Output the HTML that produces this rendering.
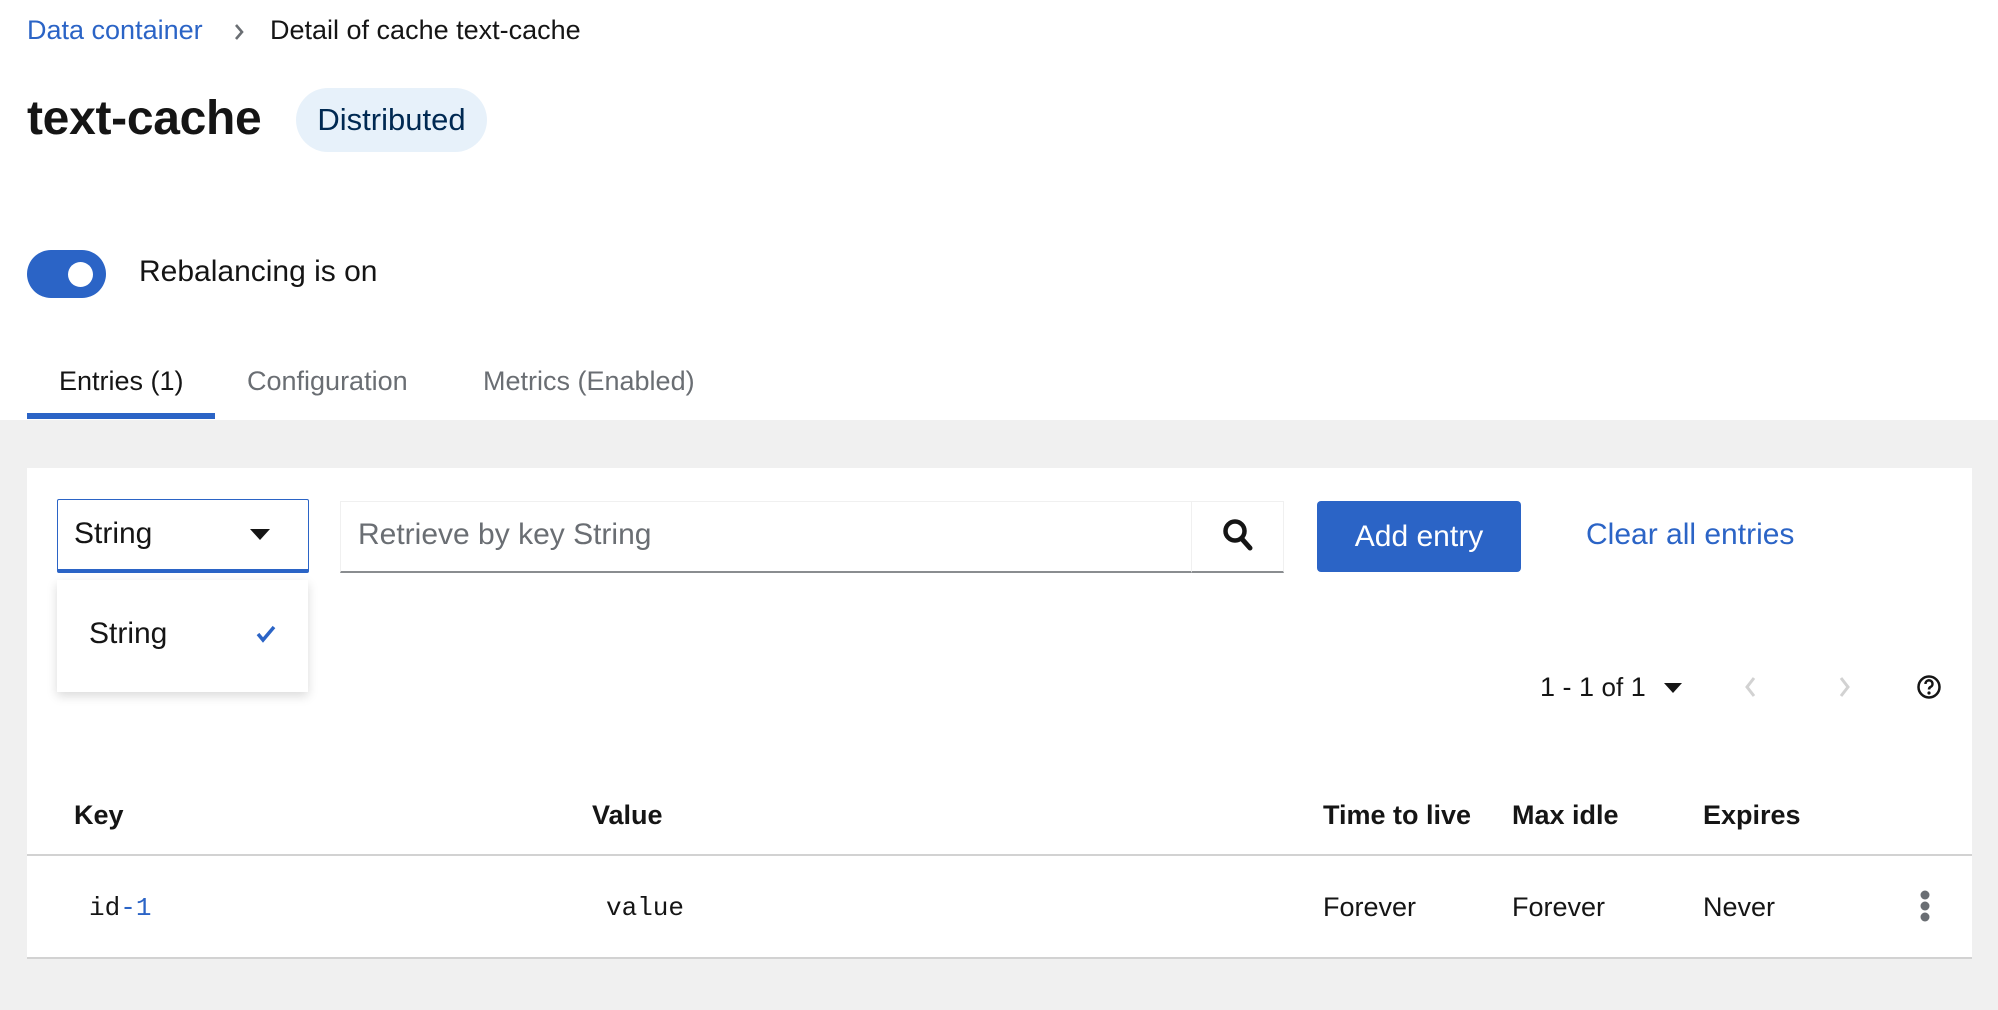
<!DOCTYPE html>
<html><head><meta charset="utf-8"><style>
*{box-sizing:border-box;margin:0;padding:0}
body{width:1998px;height:1010px;background:#fff;font-family:"Liberation Sans",sans-serif;color:#151515;position:relative;overflow:hidden}
.a{position:absolute;white-space:nowrap}
.gray{position:absolute;left:0;top:420px;width:1998px;height:590px;background:#f0f0f0}
.card{position:absolute;left:27px;top:468px;width:1945px;height:491px;background:#fff}
.th{font-weight:bold;font-size:27px;top:800px}
.td{font-size:27px;top:892px}
.mono{font-family:"Liberation Mono",monospace;font-size:26px}
</style></head><body>
<div class="a" style="left:27px;top:15px;font-size:27px;color:#2b64c6">Data container</div>
<svg class="a" style="left:233px;top:23px" width="12" height="18" viewBox="0 0 12 18"><path d="M3 2l6 7-6 7" stroke="#6a6e73" stroke-width="2.6" fill="none"/></svg>
<div class="a" style="left:270px;top:15px;font-size:27px">Detail of cache text-cache</div>
<div class="a" style="left:27px;top:91px;font-size:48px;font-weight:bold;letter-spacing:-0.3px">text-cache</div>
<div class="a" style="left:296px;top:88px;width:191px;height:64px;border-radius:32px;background:#e7f1fa;color:#002952;font-size:31px;line-height:64px;text-align:center">Distributed</div>
<div class="a" style="left:27px;top:250px;width:79px;height:48px;border-radius:24px;background:#2b64c6"></div>
<div class="a" style="left:68px;top:262px;width:25px;height:25px;border-radius:50%;background:#fff"></div>
<div class="a" style="left:139px;top:255px;font-size:30px">Rebalancing is on</div>
<div class="a" style="left:59px;top:366px;font-size:27px">Entries (1)</div>
<div class="a" style="left:247px;top:366px;font-size:27px;color:#6a6e73">Configuration</div>
<div class="a" style="left:483px;top:366px;font-size:27px;color:#6a6e73">Metrics (Enabled)</div>
<div class="a" style="left:27px;top:413px;width:188px;height:6px;background:#2b64c6"></div>
<div class="gray"></div>
<div class="card"></div>
<div class="a" style="left:57px;top:499px;width:252px;height:74px;border:1.5px solid #2b64c6;border-bottom:4px solid #2b64c6;border-radius:2px"></div>
<div class="a" style="left:74px;top:517px;font-size:30px">String</div>
<svg class="a" style="left:250px;top:529px" width="20" height="12"><path d="M0 0h20L10 11z" fill="#151515"/></svg>
<div class="a" style="left:57px;top:580px;width:251px;height:112px;background:#fff;box-shadow:0 4px 10px rgba(0,0,0,.15)"></div>
<div class="a" style="left:89px;top:617px;font-size:30px">String</div>
<svg class="a" style="left:256px;top:625px" width="20" height="18"><path d="M2 9l5 6L18 2" stroke="#2b64c6" stroke-width="3.5" fill="none"/></svg>
<div class="a" style="left:340px;top:501px;width:852px;height:72px;border:1.5px solid #f0f0f0;border-bottom:2.5px solid #8a8d90"></div>
<div class="a" style="left:358px;top:518px;font-size:30px;color:#6a6e73">Retrieve by key String</div>
<div class="a" style="left:1191px;top:501px;width:93px;height:72px;border:1.5px solid #f0f0f0;border-bottom:2.5px solid #8a8d90"></div>
<svg class="a" style="left:1222px;top:518px" width="32" height="34" viewBox="0 0 32 34"><circle cx="13" cy="13" r="9.5" stroke="#151515" stroke-width="4.5" fill="none"/><path d="M20 21l8 9" stroke="#151515" stroke-width="5" stroke-linecap="round"/></svg>
<div class="a" style="left:1317px;top:501px;width:204px;height:71px;background:#2b64c6;border-radius:4px;color:#fff;font-size:30px;line-height:71px;text-align:center">Add entry</div>
<div class="a" style="left:1586px;top:518px;font-size:30px;color:#2b64c6">Clear all entries</div>
<div class="a" style="left:1540px;top:672px;font-size:27px">1 - 1 <span style="font-size:26px">of</span> 1</div>
<svg class="a" style="left:1664px;top:683px" width="18" height="10"><path d="M0 0h18L9 10z" fill="#151515"/></svg>
<svg class="a" style="left:1743px;top:676px" width="14" height="22"><path d="M11 2L4 11l7 9" stroke="#d2d2d2" stroke-width="3" fill="none"/></svg>
<svg class="a" style="left:1838px;top:676px" width="14" height="22"><path d="M3 2l7 9-7 9" stroke="#d2d2d2" stroke-width="3" fill="none"/></svg>
<svg class="a" style="left:1916px;top:674px" width="26" height="26" viewBox="0 0 26 26"><circle cx="13" cy="13" r="10.5" stroke="#151515" stroke-width="2.5" fill="none"/><path d="M9.5 10a3.5 3.5 0 1 1 5 3c-1.3.7-1.5 1.3-1.5 2.5" stroke="#151515" stroke-width="2.5" fill="none"/><circle cx="13" cy="19" r="1.6" fill="#151515"/></svg>
<div class="a th" style="left:74px">Key</div>
<div class="a th" style="left:592px">Value</div>
<div class="a th" style="left:1323px">Time to live</div>
<div class="a th" style="left:1512px">Max idle</div>
<div class="a th" style="left:1703px">Expires</div>
<div class="a" style="left:27px;top:854px;width:1945px;height:2px;background:#d2d2d2"></div>
<div class="a td mono" style="left:89px;top:893px">id<span style="color:#2b64c6">-1</span></div>
<div class="a td mono" style="left:606px;top:893px">value</div>
<div class="a td" style="left:1323px">Forever</div>
<div class="a td" style="left:1512px">Forever</div>
<div class="a td" style="left:1703px">Never</div>
<svg class="a" style="left:1918px;top:890px" width="14" height="32"><circle cx="7" cy="5" r="4.5" fill="#6a6e73"/><circle cx="7" cy="16" r="4.5" fill="#6a6e73"/><circle cx="7" cy="27" r="4.5" fill="#6a6e73"/></svg>
<div class="a" style="left:27px;top:957px;width:1945px;height:2px;background:#d2d2d2"></div>
</body></html>
